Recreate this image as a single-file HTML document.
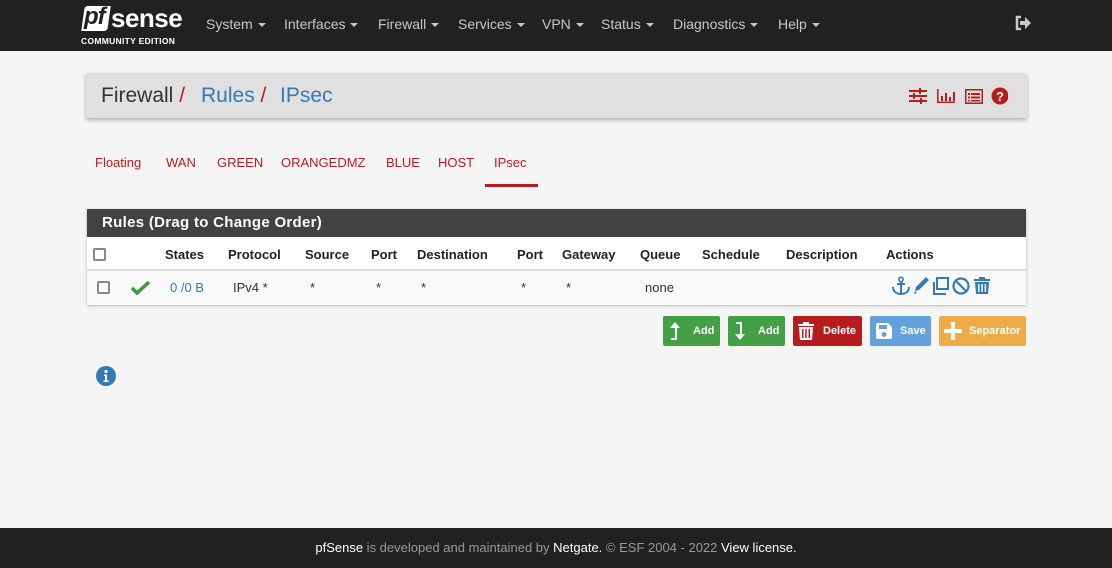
<!DOCTYPE html>
<html><head><meta charset="utf-8"><style>
*{box-sizing:border-box;margin:0;padding:0}
body{width:1112px;height:568px;background:#f5f5f5;font-family:"Liberation Sans",sans-serif;position:relative;overflow:hidden;font-size:13px;color:#333}
.nav{position:absolute;left:0;top:0;width:1112px;height:51px;background:#212121}
.nav .m{position:absolute;top:16px;color:#c8c8c8;font-size:14px}
.car{display:inline-block;width:0;height:0;border-left:4px solid transparent;border-right:4px solid transparent;border-top:4px solid #c8c8c8;vertical-align:middle;margin-left:5px}
.bc{position:absolute;left:86px;top:73px;width:941px;height:45px;background:#e0e0e0;box-shadow:0 2px 4px rgba(0,0,0,.3);border-radius:2px}
.bc span{position:absolute;top:11px;font-size:21px}
.tab{position:absolute;top:155px;color:#b71c1c;font-size:13px}
.pan{position:absolute;left:87px;top:209px;width:939px;height:96px;background:#fff;box-shadow:0 1px 3px rgba(0,0,0,.25)}
.ph{height:28px;background:#424242;color:#fff;font-weight:bold;font-size:15px;padding:5px 15px;letter-spacing:.3px}
.th{position:absolute;top:38px;font-weight:bold;font-size:13px;color:#222}
.td{position:absolute;top:71px;font-size:13px;color:#333}
.cb{position:absolute;width:13px;height:13px;border:2px solid #888;border-radius:2px;background:#fff}
.btn{position:absolute;top:316px;height:30px;border-radius:2px;color:#fff;font-size:11px;font-weight:bold;line-height:30px}
.foot{position:absolute;left:0;top:528px;width:1112px;height:40px;background:#212121;color:#999;font-size:13px;text-align:center;line-height:40px}
.foot b{color:#fff;font-weight:normal}
</style></head><body>
<div class="nav">
 <div style="position:absolute;left:83px;top:6px;width:26px;height:25px;background:#fff;border-radius:3px 0 3px 0;transform:skewX(-8deg)"></div>
 <div style="position:absolute;left:84px;top:3px;font-size:24px;font-weight:bold;font-style:italic;color:#212121;letter-spacing:-1px">pf</div>
 <div style="position:absolute;left:111px;top:3px;font-size:26px;font-weight:bold;color:#fff;letter-spacing:-0.5px">sense</div>
 <div style="position:absolute;left:81px;top:36px;font-size:8.5px;font-weight:bold;color:#fff;letter-spacing:.3px">COMMUNITY EDITION</div>
 <span class="m" style="left:206px">System<i class="car"></i></span>
 <span class="m" style="left:284px">Interfaces<i class="car"></i></span>
 <span class="m" style="left:378px">Firewall<i class="car"></i></span>
 <span class="m" style="left:458px">Services<i class="car"></i></span>
 <span class="m" style="left:542px">VPN<i class="car"></i></span>
 <span class="m" style="left:601px">Status<i class="car"></i></span>
 <span class="m" style="left:673px">Diagnostics<i class="car"></i></span>
 <span class="m" style="left:778px">Help<i class="car"></i></span>
 <svg style="position:absolute;left:1014px;top:15px" width="18" height="16" viewBox="0 0 18 16"><path d="M7 2H3v12h4" fill="none" stroke="#c8c8c8" stroke-width="2.5"/><path d="M6 6h5V2l6 6-6 6v-4H6z" fill="#c8c8c8"/></svg>
</div>
<div class="bc">
 <span style="left:15px;color:#333">Firewall <span style="position:static;color:#b71c1c">/</span></span>
 <span style="left:115px;color:#337ab7">Rules <span style="position:static;color:#b71c1c">/</span></span>
 <span style="left:194px;color:#337ab7">IPsec</span>
 <svg style="position:absolute;left:822px;top:14px" width="100" height="18" viewBox="0 0 100 18" fill="#b71c1c">
  <rect x="1" y="3" width="18" height="2"/><rect x="1" y="8" width="18" height="2"/><rect x="1" y="13" width="18" height="2"/><rect x="11" y="1" width="2" height="6"/><rect x="5" y="6" width="2" height="6"/><rect x="12" y="11" width="2" height="6"/>
  <path d="M29 2v14h18v-1.5H30.5V2z"/><rect x="33" y="9" width="2" height="5"/><rect x="37" y="6" width="2" height="8"/><rect x="41" y="10" width="2" height="4"/><rect x="45" y="5" width="2" height="9"/>
  <path d="M57 2h18v15H57zM58.5 3.5v12h15v-12z"/><rect x="60" y="6" width="2" height="2"/><rect x="63" y="6" width="9" height="2"/><rect x="60" y="9.5" width="2" height="2"/><rect x="63" y="9.5" width="9" height="2"/><rect x="60" y="13" width="2" height="1.5"/><rect x="63" y="13" width="9" height="1.5"/>
  <circle cx="92" cy="9" r="8.5"/><text x="92" y="14" font-size="13" font-weight="bold" fill="#fff" text-anchor="middle" font-family="Liberation Sans">?</text>
 </svg>
</div>
<span class="tab" style="left:95px">Floating</span>
<span class="tab" style="left:166px">WAN</span>
<span class="tab" style="left:217px">GREEN</span>
<span class="tab" style="left:281px">ORANGEDMZ</span>
<span class="tab" style="left:386px">BLUE</span>
<span class="tab" style="left:438px">HOST</span>
<span class="tab" style="left:494px">IPsec</span>
<div style="position:absolute;left:485px;top:184px;width:53px;height:3px;background:#b71c1c"></div>
<div class="pan">
 <div class="ph">Rules (Drag to Change Order)</div>
 <div style="position:absolute;left:0;top:60px;width:939px;height:2px;background:#ddd"></div>
 <div style="position:absolute;left:0;top:62px;width:939px;height:34px;background:#f9f9f9"></div>
 <div class="cb" style="left:6px;top:39px"></div>
 <span class="th" style="left:78px">States</span><span class="th" style="left:141px">Protocol</span><span class="th" style="left:218px">Source</span><span class="th" style="left:284px">Port</span><span class="th" style="left:330px">Destination</span><span class="th" style="left:430px">Port</span><span class="th" style="left:475px">Gateway</span><span class="th" style="left:553px">Queue</span><span class="th" style="left:615px">Schedule</span><span class="th" style="left:699px">Description</span><span class="th" style="left:799px">Actions</span>
 <div class="cb" style="left:10px;top:72px"></div>
 <svg style="position:absolute;left:44px;top:71px" width="19" height="15" viewBox="0 0 19 15"><path d="M1 8l5 5L18 2" fill="none" stroke="#3c9b3c" stroke-width="3.5"/></svg>
 <span class="td" style="left:83px;color:#337ab7">0 /0 B</span><span class="td" style="left:146px">IPv4 *</span><span class="td" style="left:223px">*</span><span class="td" style="left:289px">*</span><span class="td" style="left:334px">*</span><span class="td" style="left:434px">*</span><span class="td" style="left:479px">*</span><span class="td" style="left:558px">none</span>
 <svg style="position:absolute;left:804px;top:67px" width="106" height="20" viewBox="0 0 106 20" fill="#337ab7">
  <circle cx="10" cy="3.5" r="2.2" fill="none" stroke="#337ab7" stroke-width="1.6"/><rect x="9" y="5" width="2" height="13"/><rect x="6" y="7" width="8" height="2"/><path d="M2 11c0 5 4 7 8 7s8-2 8-7" fill="none" stroke="#337ab7" stroke-width="2"/>
  <path d="M24 15l1-4L35 1l3 3-10 10z M24 15l-1 3 3-1z"/>
  <path d="M46 2h11v11H46z" fill="none" stroke="#337ab7" stroke-width="2"/><path d="M43 6v12h12" fill="none" stroke="#337ab7" stroke-width="2"/>
  <circle cx="70" cy="10" r="7.5" fill="none" stroke="#337ab7" stroke-width="2.2"/><path d="M65 5l10 10" stroke="#337ab7" stroke-width="2.2"/>
  <rect x="83" y="3" width="16" height="2"/><rect x="88" y="1" width="6" height="2"/><path d="M84 6h14l-1 12H85zM87 8v8h1.5V8zM90.3 8v8h1.5V8zM93.6 8v8h1.5V8z" fill-rule="evenodd"/>
 </svg>
</div>
<div class="btn" style="left:663px;width:57px;background:#43a047"><svg style="position:absolute;left:6px;top:6px" width="12" height="18" viewBox="0 0 12 18"><path d="M6 0l5 6H8v12H2v-2h4V6H1z" fill="#fff"/></svg><span style="position:absolute;left:30px">Add</span></div>
<div class="btn" style="left:728px;width:57px;background:#43a047"><svg style="position:absolute;left:6px;top:6px" width="12" height="18" viewBox="0 0 12 18"><path d="M6 18l5-6H8V0H2v2h4v10H1z" fill="#fff"/></svg><span style="position:absolute;left:30px">Add</span></div>
<div class="btn" style="left:793px;width:69px;background:#b71c1c"><svg style="position:absolute;left:5px;top:6px" width="16" height="18" viewBox="0 0 16 18" fill="#fff"><rect x="0" y="2" width="16" height="2"/><rect x="5" y="0" width="6" height="2"/><path d="M1 5h14l-1 13H2zM4 7v9h1.5V7zM7.2 7v9h1.5V7zM10.5 7v9H12V7z" fill-rule="evenodd"/></svg><span style="position:absolute;left:30px">Delete</span></div>
<div class="btn" style="left:870px;width:61px;background:#64a0dc"><svg style="position:absolute;left:6px;top:7px" width="16" height="16" viewBox="0 0 16 16" fill="#fff"><path d="M0 2a2 2 0 012-2h10l4 4v10a2 2 0 01-2 2H2a2 2 0 01-2-2zM3 2v4h8V2zM8 9a2.5 2.5 0 100 5 2.5 2.5 0 000-5z" fill-rule="evenodd"/></svg><span style="position:absolute;left:30px">Save</span></div>
<div class="btn" style="left:939px;width:87px;background:#efab48"><svg style="position:absolute;left:5px;top:6px" width="18" height="18" viewBox="0 0 18 18" fill="#fff"><rect x="7" y="0" width="4" height="18"/><rect x="0" y="7" width="18" height="4"/></svg><span style="position:absolute;left:30px">Separator</span></div>
<svg style="position:absolute;left:96px;top:366px" width="20" height="20" viewBox="0 0 20 20"><circle cx="10" cy="10" r="10" fill="#337ab7"/><circle cx="10" cy="5.5" r="1.6" fill="#fff"/><path d="M8 8.5h3v6h1.5V16h-5v-1.5H9v-4.5H8z" fill="#fff"/></svg>
<div class="foot"><b>pfSense</b> is developed and maintained by <b>Netgate.</b> © ESF 2004 - 2022 <b>View license.</b></div>
</body></html>
